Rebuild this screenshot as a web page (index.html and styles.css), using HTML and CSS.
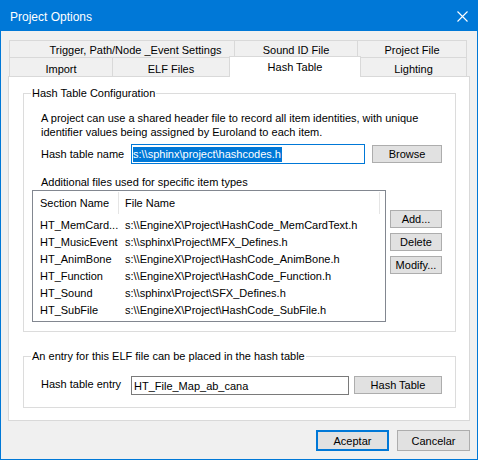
FILE: index.html
```html
<!DOCTYPE html>
<html>
<head>
<meta charset="utf-8">
<link rel="stylesheet" href="styles.css">
</head>
<body>
<div class="window">
  <div class="titlebar">
    <span class="title">Project Options</span>
    <svg class="close" width="11" height="11" viewBox="0 0 11 11"><path d="M0.5 0.5 L10.5 10.5 M10.5 0.5 L0.5 10.5" stroke="#fff" stroke-width="1.1" fill="none"/></svg>
  </div>
  <div class="client">
    <div class="tabs">
      <div class="tabrow row1">
        <div class="tab t-trigger">Trigger, Path/Node _Event Settings</div>
        <div class="tab t-sound">Sound ID File</div>
        <div class="tab t-project last">Project File</div>
      </div>
      <div class="tabrow row2">
        <div class="tab t-import">Import</div>
        <div class="tab t-elf">ELF Files</div>
        <div class="tab t-hash selected">Hash Table</div>
        <div class="tab t-light last">Lighting</div>
      </div>
    </div>
    <div class="panel">
      <fieldset class="group g1">
        <legend>Hash Table Configuration</legend>
        <p class="desc">A project can use a shared header file to record all item identities, with unique<br>identifier values being assigned by Euroland to each item.</p>
        <div class="field-row">
          <span class="label">Hash table name</span>
          <div class="input focused w1"><span class="sel">s:\\sphinx\project\hashcodes.h</span></div>
          <button class="btn browse">Browse</button>
        </div>
        <div class="sub">Additional files used for specific item types</div>
        <div class="list-area">
          <div class="listview">
            <div class="lv-head">
              <div class="c1 hcell">Section Name</div>
              <div class="c2 hcell">File Name</div>
              <div class="c3 hcell"></div>
            </div>
            <div class="lv-row"><div class="c1">HT_MemCard...</div><div class="c2">s:\\EngineX\Project\HashCode_MemCardText.h</div></div>
            <div class="lv-row"><div class="c1">HT_MusicEvent</div><div class="c2">s:\\sphinx\Project\MFX_Defines.h</div></div>
            <div class="lv-row"><div class="c1">HT_AnimBone</div><div class="c2">s:\\EngineX\Project\HashCode_AnimBone.h</div></div>
            <div class="lv-row"><div class="c1">HT_Function</div><div class="c2">s:\\EngineX\Project\HashCode_Function.h</div></div>
            <div class="lv-row"><div class="c1">HT_Sound</div><div class="c2">s:\\sphinx\Project\SFX_Defines.h</div></div>
            <div class="lv-row"><div class="c1">HT_SubFile</div><div class="c2">s:\\EngineX\Project\HashCode_SubFile.h</div></div>
          </div>
          <div class="side-buttons">
            <button class="btn side">Add...</button>
            <button class="btn side">Delete</button>
            <button class="btn side">Modify...</button>
          </div>
        </div>
      </fieldset>
      <fieldset class="group g2">
        <legend>An entry for this ELF file can be placed in the hash table</legend>
        <div class="field-row row-entry">
          <span class="label label2">Hash table entry</span>
          <div class="input w2">HT_File_Map_ab_cana</div>
          <button class="btn hashbtn">Hash Table</button>
        </div>
      </fieldset>
    </div>
    <div class="footer">
      <button class="btn dlg default">Aceptar</button>
      <button class="btn dlg">Cancelar</button>
    </div>
  </div>
</div>
</body>
</html>
```

FILE: styles.css
```css
* { box-sizing: border-box; }
html, body { margin: 0; padding: 0; }
body {
  font-family: "Liberation Sans", Arial, sans-serif;
  font-size: 11px;
  color: #000;
  background: #f0f0f0;
}
.window {
  width: 478px;
  height: 460px;
  border: 1px solid #0078d7;
  background: #f0f0f0;
  display: flex;
  flex-direction: column;
}
.titlebar {
  height: 30px;
  background: #0078d7;
  display: flex;
  align-items: center;
  padding-left: 9px;
  padding-right: 9px;
  color: #fff;
  flex: none;
}
.title {
  font-size: 12px;
  margin-top: 1px;
}
.close {
  margin-left: auto;
}
.client {
  padding: 9px 7px 0 7px;
}
.tabs {
  margin-left: 1px;
  width: 458px;
}
.tabrow {
  display: flex;
}
.tab {
  background: #f0f0f0;
  border-top: 1px solid #d9d9d9;
  border-left: 1px solid #d9d9d9;
  text-align: center;
  white-space: nowrap;
}
.tab.last { border-right: 1px solid #d9d9d9; }
.row1 .tab {
  height: 17px;
  line-height: 14px;
  padding-top: 2px;
}
.row2 .tab {
  height: 19px;
  line-height: 14px;
  padding-top: 4px;
}
.t-trigger { width: 225px; padding-left: 27px; }
.t-sound { width: 123px; }
.t-project { width: 110px; }
.t-import { width: 103px; }
.t-elf { width: 117px; }
.t-hash { width: 132px; }
.t-light { width: 106px; border-left: none; }
.row2 .tab.selected {
  background: #fff;
  border-right: 1px solid #d9d9d9;
  height: 21px;
  margin-top: -1px;
  margin-bottom: -1px;
  padding-top: 3px;
  position: relative;
  z-index: 1;
}
.panel {
  width: 462px;
  height: 345px;
  background: #fff;
  border: 1px solid #d9d9d9;
  padding-top: 9px;
}
.group {
  margin: 0 13px 0 14px;
  padding: 0 0 0 17px;
  border: 1px solid #dcdcdc;
  min-width: 0;
}
.group legend {
  margin-left: -10px;
  padding: 0 1px;
  line-height: 14px;
}
.g1 { padding-bottom: 9px; }
.g2 { margin-top: 17px; padding-bottom: 12px; }
.desc {
  margin: 11px 0 0 0;
  line-height: 14px;
}
.field-row {
  display: flex;
  align-items: center;
  margin-top: 5px;
}
.label {
  width: 90px;
  line-height: 14px;
  white-space: nowrap;
}
.input {
  border: 1px solid #7a7a7a;
  background: #fff;
  display: flex;
  align-items: center;
  padding-left: 2px;
  white-space: nowrap;
}
.input.focused { border-color: #0078d7; padding-left: 1px; }
.w1 { width: 234px; height: 20px; }
.w2 { width: 218px; height: 19px; }
.sel {
  background: #0078d7;
  color: #fff;
  line-height: 15px;
  padding-right: 1px;
}
.btn {
  font-family: inherit;
  font-size: 11px;
  color: #000;
  background: #e1e1e1;
  border: 1px solid #adadad;
  padding: 0;
  margin: 0;
  line-height: 14px;
}
.browse { width: 70px; height: 18px; margin-left: 7px; }
.sub {
  margin-top: 11px;
  line-height: 14px;
}
.list-area {
  display: flex;
  align-items: flex-start;
  margin-top: 1px;
  margin-left: -9px;
}
.listview {
  width: 354px;
  height: 132px;
  border: 1px solid #828790;
  background: #fff;
}
.lv-head {
  display: flex;
  height: 24px;
  align-items: stretch;
}
.hcell {
  display: flex;
  align-items: center;
  border-right: 1px solid #e5e5e5;
  margin: 1px 0 1px 0;
}
.c1 { width: 86px; padding-left: 7px; white-space: nowrap; overflow: hidden; }
.c2 { padding-left: 6px; white-space: nowrap; }
.hcell.c1 { width: 86px; }
.hcell.c2 { width: 261px; }
.hcell.c3 { border-right: none; flex: 1; }
.lv-row {
  display: flex;
  height: 17px;
  line-height: 17px;
}
.lv-head + .lv-row { margin-top: 2px; }
.lv-row .c1 { width: 86px; }
.side-buttons {
  display: flex;
  flex-direction: column;
  gap: 5px;
  margin-left: 4px;
  margin-top: 20px;
}
.side { width: 52px; height: 18px; }
.row-entry { margin-top: 13px; align-items: flex-start; }
.label2 { margin-top: 1px; }
.hashbtn { width: 88px; height: 18px; margin-left: 5px; }
.footer {
  display: flex;
  justify-content: flex-end;
  gap: 8px;
  margin-top: 9px;
}
.dlg { width: 73px; height: 21px; }
.default { border: 2px solid #0078d7; }
```
